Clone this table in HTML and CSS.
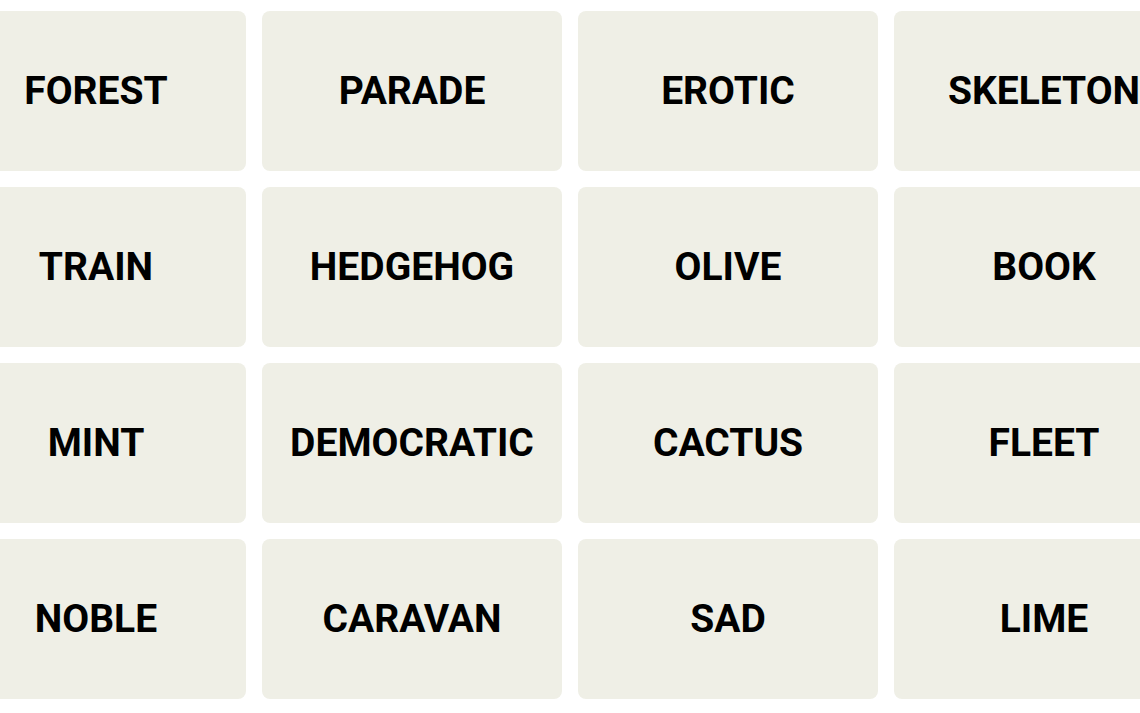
FILE: index.html
```html
<!DOCTYPE html>
<html>
<head>
<meta charset="utf-8">
<link rel="stylesheet" href="styles.css">
</head>
<body>
<div class="board">
  <div class="tile">FOREST</div>
  <div class="tile">PARADE</div>
  <div class="tile">EROTIC</div>
  <div class="tile">SKELETON</div>
  <div class="tile">TRAIN</div>
  <div class="tile">HEDGEHOG</div>
  <div class="tile">OLIVE</div>
  <div class="tile">BOOK</div>
  <div class="tile">MINT</div>
  <div class="tile">DEMOCRATIC</div>
  <div class="tile">CACTUS</div>
  <div class="tile">FLEET</div>
  <div class="tile">NOBLE</div>
  <div class="tile">CARAVAN</div>
  <div class="tile">SAD</div>
  <div class="tile">LIME</div>
</div>
</body>
</html>
```
FILE: styles.css
```css
html, body {
  margin: 0;
  padding: 0;
  background: #ffffff;
  overflow: hidden;
}
.board {
  display: grid;
  grid-template-columns: repeat(4, 300px);
  grid-auto-rows: 160px;
  gap: 16px;
  padding-top: 11px;
  margin-left: -54px;
  width: max-content;
}
.tile {
  background: #efefe6;
  border-radius: 8px;
  display: flex;
  align-items: center;
  justify-content: center;
  font-family: Roboto, "Liberation Sans", sans-serif;
  font-weight: 700;
  font-size: 39px;
  color: #000;
  text-transform: uppercase;
}
```
